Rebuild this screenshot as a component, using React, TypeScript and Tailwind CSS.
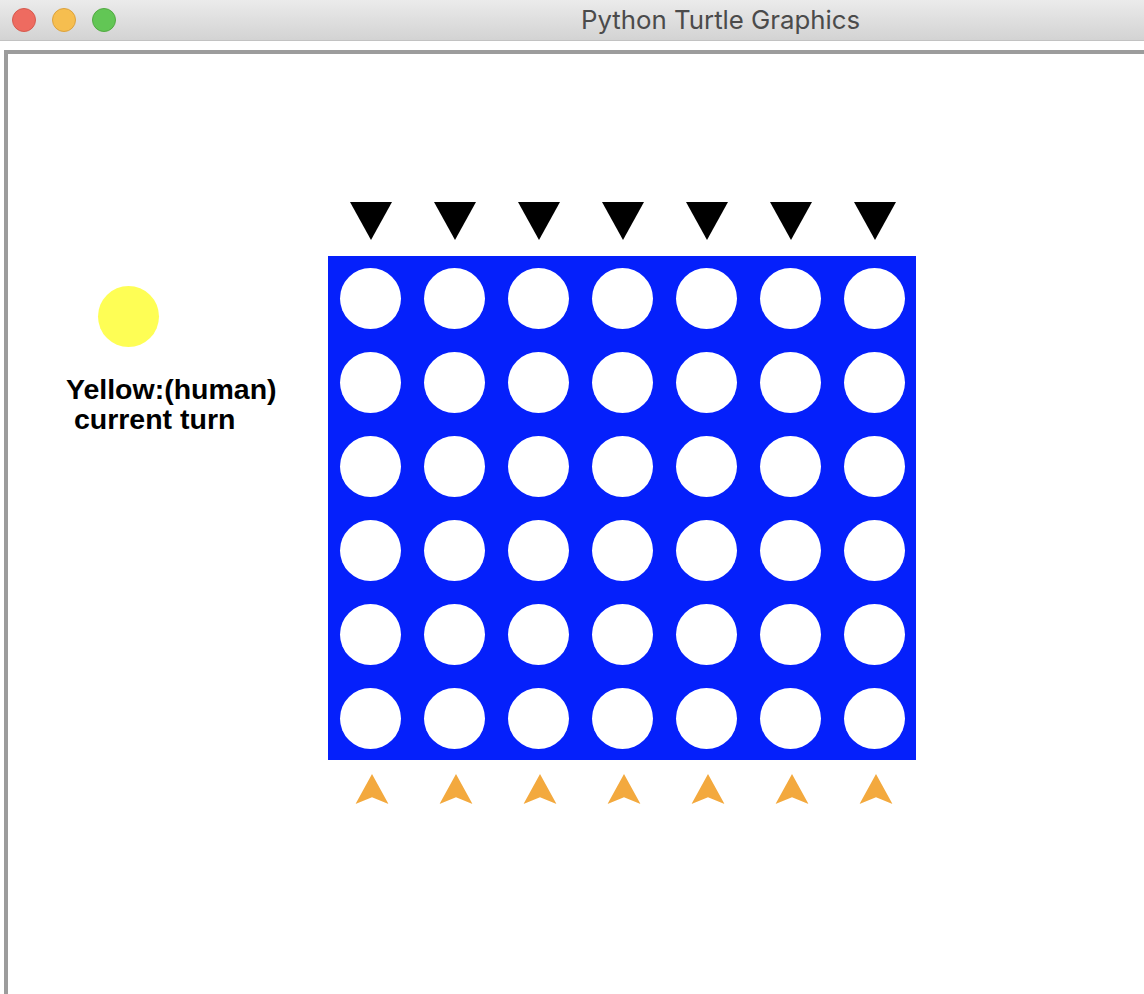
import React from "react";

const COLS = 7;
const ROWS = 6;

function DownTriangle() {
  return (
    <svg width="42" height="38" viewBox="0 0 42 38" className="block translate-x-[1px]">
      <polygon points="0,0 42,0 21,38" fill="#000000" />
    </svg>
  );
}

function UpArrow() {
  return (
    <svg width="33" height="30" viewBox="0 0 33 30" className="block translate-x-[1.5px]">
      <polygon points="16.5,0 33,30 16.5,23.3 0,30" fill="#f3a93e" />
    </svg>
  );
}

export default function App() {
  const cols = Array.from({ length: COLS }, (_, i) => i);
  const cells = Array.from({ length: COLS * ROWS }, (_, i) => i);
  return (
    <div className="w-[1144px] h-[994px] overflow-hidden bg-white flex flex-col">
      {/* Title bar */}
      <div className="h-[41px] shrink-0 flex items-center bg-gradient-to-b from-[#ebebeb] to-[#d3d3d3] border-b border-[#c2c2c2]">
        <div className="flex items-center gap-[16px] pl-[12px]">
          <div className="w-[24px] h-[24px] rounded-full bg-[#ee6b60] border border-[#d65a4e]" />
          <div className="w-[24px] h-[24px] rounded-full bg-[#f6be4f] border border-[#dca23d]" />
          <div className="w-[24px] h-[24px] rounded-full bg-[#62c655] border border-[#52aa42]" />
        </div>
        <div
          className="ml-[465px] text-[25.8px] leading-none text-[#4b4b4b] pb-[1px]"
          style={{ fontFamily: "Inter, 'Liberation Sans', sans-serif" }}
        >
          Python Turtle Graphics
        </div>
      </div>

      {/* White gap */}
      <div className="flex-1 pt-[9px] pl-[4px] flex flex-col">
        <div className="flex-1 border-l-4 border-t-4 border-[#9c9c9c] flex bg-white">
          {/* Left info panel */}
          <div className="w-[320px] shrink-0 pl-[58px] pt-[232px]">
            <div className="ml-[32px] w-[61px] h-[61px] rounded-full bg-[#fefe55]" />
            <div
              className="mt-[27px] whitespace-pre text-[28.5px] leading-[30px] font-bold text-black"
              style={{ fontFamily: "'Liberation Sans', Arial, sans-serif" }}
            >
              {"Yellow:(human)\n current turn"}
            </div>
          </div>

          {/* Board column */}
          <div className="pt-[148px] flex flex-col">
            <div className="grid grid-cols-7 w-[588px]">
              {cols.map((c) => (
                <div key={c} className="flex justify-center">
                  <DownTriangle />
                </div>
              ))}
            </div>
            <div className="mt-[16px] w-[588px] h-[504px] bg-[#0520fb] grid grid-cols-7 grid-rows-6">
              {cells.map((i) => (
                <div key={i} className="flex items-center justify-center">
                  <div className="w-[61px] h-[61px] rounded-full bg-white" />
                </div>
              ))}
            </div>
            <div className="mt-[14px] grid grid-cols-7 w-[588px]">
              {cols.map((c) => (
                <div key={c} className="flex justify-center">
                  <UpArrow />
                </div>
              ))}
            </div>
          </div>
        </div>
      </div>
    </div>
  );
}
